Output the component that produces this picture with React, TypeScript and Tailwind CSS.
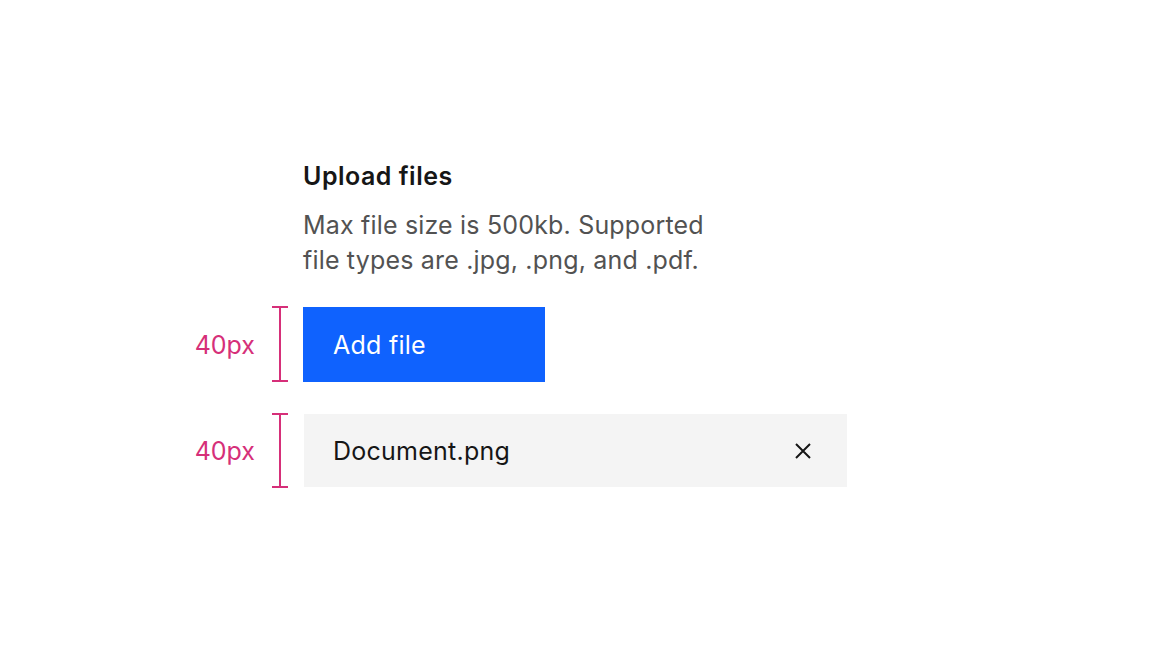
import React from "react";

function Bracket({ h }: { h: number }) {
  return (
    <svg width="16" height={h} viewBox={`0 0 16 ${h}`} className="shrink-0">
      <line x1="0" y1="1" x2="16" y2="1" stroke="#d62f79" strokeWidth="2" />
      <line x1="8" y1="1" x2="8" y2={h - 1} stroke="#d62f79" strokeWidth="2" />
      <line x1="0" y1={h - 1} x2="16" y2={h - 1} stroke="#d62f79" strokeWidth="2" />
    </svg>
  );
}

export default function App() {
  return (
    <div
      className="w-[1152px] h-[650px] bg-white pt-[160px] flex flex-col"
      style={{ fontFamily: "Inter, 'Liberation Sans', sans-serif" }}
    >
      <div className="pl-[303px]">
        <div className="text-[25px] leading-[32px] font-semibold tracking-[0.5px] text-[#161616]">Upload files</div>
        <div className="mt-[16px] text-[25px] leading-[35px] tracking-[0.18px] text-[#525252]">
          Max file size is 500kb. Supported
          <br />
          file types are .jpg, .png, and .pdf.
        </div>
      </div>

      <div className="mt-[28px] flex items-center">
        <div className="w-[303px] flex items-center justify-end gap-[17px] pr-[15px]">
          <span className="text-[25px] text-[#d62f79] pt-[3px]">40px</span>
          <Bracket h={76} />
        </div>
        <button className="w-[242px] h-[75px] bg-[#0f62fe] text-white text-[25px] tracking-[0.25px] text-left pl-[30px] pt-[4px]">
          Add file
        </button>
      </div>

      <div className="mt-[31px] flex items-center">
        <div className="w-[303px] flex items-center justify-end gap-[17px] pr-[15px]">
          <span className="text-[25px] text-[#d62f79] pt-[3px]">40px</span>
          <Bracket h={75} />
        </div>
        <div className="ml-[1px] w-[543px] h-[73px] bg-[#f4f4f4] flex items-center justify-between pl-[29px] pr-[36px]">
          <span className="text-[25px] tracking-[0.25px] text-[#161616] pt-[3px]">Document.png</span>
          <svg width="16" height="16" viewBox="0 0 16 16">
            <path d="M1 1 L15 15 M15 1 L1 15" stroke="#161616" strokeWidth="2" />
          </svg>
        </div>
      </div>
    </div>
  );
}
